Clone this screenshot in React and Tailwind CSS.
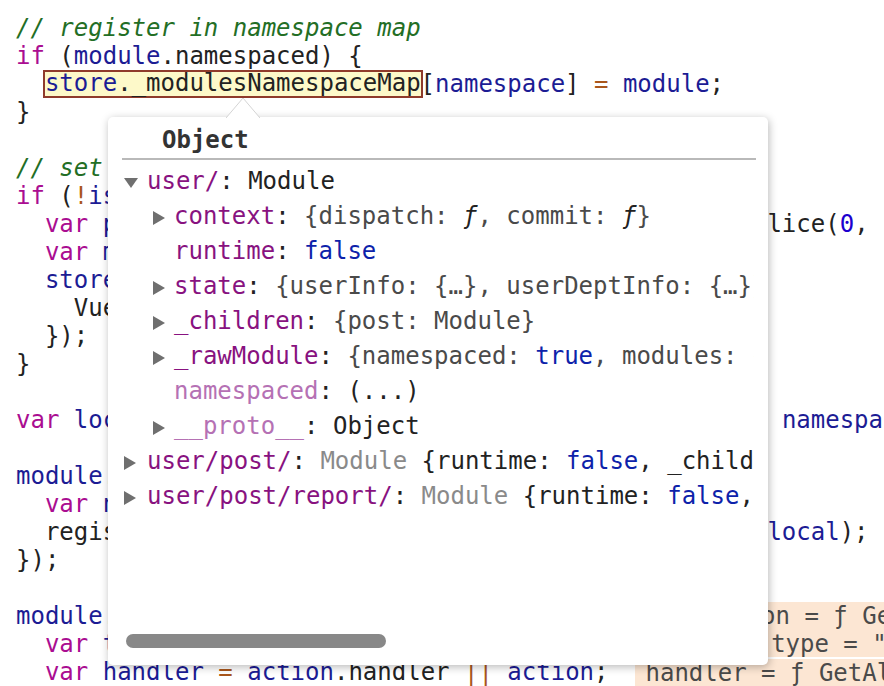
const K = "text-[#aa0d91]";
const V = "text-[#1c1c94]";
const P = "text-[#222]";
const O = "text-[#a9561c]";
const N = "text-[#1c00cf]";
const C = "text-[#236e25] italic";

const code = [
  [["// register in namespace map", C]],
  [["if", K], [" (", P], ["module", V], [".namespaced) {", P]],
  "HIGHLIGHT",
  [["}", P]],
  [],
  [["// set state", C]],
  [["if", K], [" (", P], ["!", O], ["isRoot", V], [" ", P], ["&&", O], [" ", P], ["!", O], ["hot", V], [") {", P]],
  [["  ", P], ["var", K], [" ", P], ["parentState", V], [" ", P], ["=", O], [" getNestedState(", P], ["rootState", V], [", ", P], ["path", V], [".slice(", P], ["0", N], [", ", P], ["-", O], ["1", N], ["));", P]],
  [["  ", P], ["var", K], [" ", P], ["moduleName", V], [" ", P], ["=", O], [" ", P], ["path", V], ["[", P], ["path", V], [".length ", P], ["-", O], [" ", P], ["1", N], ["];", P]],
  [["  ", P], ["store", V], ["._withCommit(", P], ["function", K], [" () {", P]],
  [["    Vue.set(", P], ["parentState", V], [", ", P], ["moduleName", V], [", ", P], ["module", V], [".state);", P]],
  [["  });", P]],
  [["}", P]],
  [],
  [["var", K], [" ", P], ["local", V], [" ", P], ["=", O], [" ", P], ["module", V], [".context ", P], ["=", O], [" makeLocalContext(", P], ["store", V], [", ", P], ["namespace", V], [", ", P], ["path", V], [");", P]],
  [],
  [["module", V], [".forEachMutation(", P], ["function", K], [" (", P], ["mutation", V], [", ", P], ["key", V], [") {", P]],
  [["  ", P], ["var", K], [" ", P], ["namespacedType", V], [" ", P], ["=", O], [" ", P], ["namespace", V], [" ", P], ["+", O], [" ", P], ["key", V], [";", P]],
  [["  registerMutation(", P], ["store", V], [", ", P], ["namespacedType", V], [", ", P], ["mutation", V], [", ", P], ["local", V], [");", P]],
  [["});", P]],
  [],
  [["module", V], [".forEachAction(", P], ["function", K], [" (", P], ["action", V], [", ", P], ["key", V], [") {", P]],
  [["  ", P], ["var", K], [" ", P], ["type", V], [" ", P], ["=", O], [" ", P], ["action", V], [".root ", P], ["?", O], [" ", P], ["key", V], [" ", P], [":", O], [" ", P], ["namespace", V], [" ", P], ["+", O], [" ", P], ["key", V], [";", P]],
  [["  ", P], ["var", K], [" ", P], ["handler", V], [" ", P], ["=", O], [" ", P], ["action", V], [".handler ", P], ["||", O], [" ", P], ["action", V], [";", P]],
];

const notes = {
  21: { text: "action = ƒ GetAllTodos(…), key = \"GetAllTodos\"", cls: "ml-[26px] h-[28px]" },
  22: { text: "type = \"GetAllTodos\"", cls: "ml-[36px] h-[27px]" },
  23: { text: "handler = ƒ GetAllTodos(…)", cls: "ml-[26px] h-[28px] mt-[1px]" },
};

function Tokens({ list }) {
  return list.map(([t, c], i) => (
    <span key={i} className={c}>
      {t}
    </span>
  ));
}

function CodeLine({ line, idx }) {
  if (line === "HIGHLIGHT") {
    return (
      <div className="h-[28px] whitespace-pre">
        <span className={P}>{"  "}</span>
        <span className="inline-block h-[28px] -mx-[2px] bg-[#fdf9c9] px-[2px] align-top leading-[28px] shadow-[inset_0_0_0_2px_#8f3b2b]">
          <span className="relative -top-[1px]">
            <span className={V}>store</span>
            <span className={P}>._modulesNamespaceMap</span>
          </span>
        </span>
        <Tokens list={[["[", P], ["namespace", V], ["] ", P], ["=", O], [" ", P], ["module", V], [";", P]]} />
      </div>
    );
  }
  const note = notes[idx];
  return (
    <div className="h-[28px] whitespace-pre">
      <Tokens list={line} />
      {note && (
        <span className={`inline-block align-top bg-[#fce6d3] pl-[11px] pr-[400px] leading-[28px] text-[#4a4a4a] ${note.cls}`}>
          {note.text}
        </span>
      )}
    </div>
  );
}

function Tri({ dir }) {
  if (dir === "down") {
    return (
      <svg width="14" height="10" viewBox="0 0 14 10" className="ml-[2px] mt-[3px]">
        <polygon points="0,0 14,0 7,10" fill="#6f6f6f" />
      </svg>
    );
  }
  if (dir === "right") {
    return (
      <svg width="12" height="14" viewBox="0 0 12 14" className="ml-[2px] mt-[3px]">
        <polygon points="0,0 12,7 0,14" fill="#6f6f6f" />
      </svg>
    );
  }
  return null;
}

const PN = "text-[#881280]";
const PL = "text-[#b571b4]";
const D = "text-[#222]";
const G = "text-[#4a4a4a]";
const B = "text-[#0d22aa]";
const GM = "text-[#8a8a8a]";

function Row({ level, tri, parts }) {
  return (
    <div className={level ? "flex h-[35px] pl-[29px]" : "flex h-[35px]"}>
      <span className={level ? "flex w-[23px] shrink-0 items-center" : "flex w-[25px] shrink-0 items-center"}>
        <Tri dir={tri} />
      </span>
      <span className="whitespace-pre leading-[35px]">
        <Tokens list={parts} />
      </span>
    </div>
  );
}

const rows = [
  { level: 0, tri: "down", parts: [["user/", PN], [": Module", D]] },
  { level: 1, tri: "right", parts: [["context", PN], [": ", D], ["{dispatch: ", G], ["ƒ", D + " italic"], [", commit: ", G], ["ƒ", D + " italic"], ["}", G]] },
  { level: 1, tri: null, parts: [["runtime", PN], [": ", D], ["false", B]] },
  { level: 1, tri: "right", parts: [["state", PN], [": ", D], ["{userInfo: {…}, userDeptInfo: {…}}", G]] },
  { level: 1, tri: "right", parts: [["_children", PN], [": ", D], ["{post: Module}", G]] },
  { level: 1, tri: "right", parts: [["_rawModule", PN], [": ", D], ["{namespaced: ", G], ["true", B], [", modules: {…}}", G]] },
  { level: 1, tri: null, parts: [["namespaced", PL], [": (...)", D]] },
  { level: 1, tri: "right", parts: [["__proto__", PL], [": Object", D]] },
  { level: 0, tri: "right", parts: [["user/post/", PN], [": ", D], ["Module", GM], [" {runtime: ", D], ["false", B], [", _children: {…}, …}", D]] },
  { level: 0, tri: "right", parts: [["user/post/report/", PN], [": ", D], ["Module", GM], [" {runtime: ", D], ["false", B], [", _children: {…}}", D]] },
];

export default function App() {
  return (
    <div className="relative h-[686px] w-[884px] overflow-hidden bg-white font-['DejaVu_Sans_Mono',monospace] text-[24px] leading-[28px] text-[#222]">
      <div className="pl-[16px] pt-[14px]">
        {code.map((line, i) => (
          <CodeLine key={i} line={line} idx={i} />
        ))}
      </div>

      <div className="absolute left-[108px] top-[117px] flex h-[548px] w-[660px] flex-col rounded-[5px] bg-white pl-[14px] pr-[14px] shadow-[1px_2px_9px_rgba(0,0,0,0.28)]">
        <svg width="34" height="21" viewBox="0 0 34 21" className="absolute left-[118px] top-[-20px]">
          <polyline points="0,21 17,1 34,21" fill="#ffffff" stroke="#d4d4d4" strokeWidth="1" />
        </svg>
        <div className="pl-[40px] pt-[9px] font-bold leading-[28px] text-[#333]">Object</div>
        <div className="mr-[-2px] mt-[4px] h-[2px] bg-[#b9b9b9]" />
        <div className="mt-[4px] flex-1 overflow-hidden">
          {rows.map((r, i) => (
            <Row key={i} {...r} />
          ))}
        </div>
        <div className="mb-[17px] ml-[4px] h-[14px] w-[260px] rounded-full bg-[#888]" />
      </div>
    </div>
  );
}
